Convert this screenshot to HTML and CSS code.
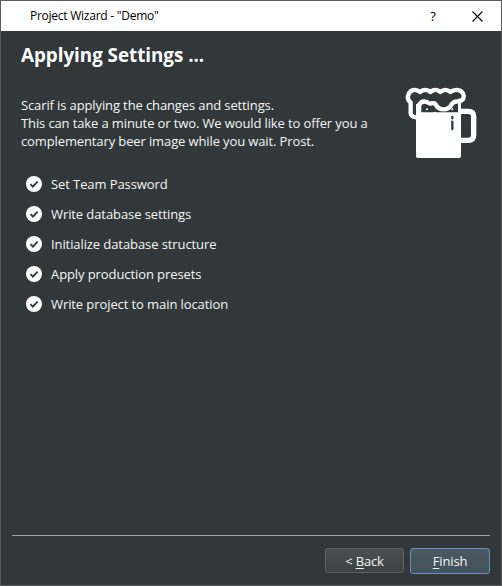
FILE: index.html
```html
<!DOCTYPE html>
<html lang="en">
<head>
<meta charset="utf-8">
<title>Project Wizard</title>
<link rel="stylesheet" href="styles.css">
</head>
<body>
<div class="window">
  <header class="titlebar">
    <span class="caption">Project Wizard - "Demo"</span>
    <span class="help">?</span>
    <svg class="close" viewBox="0 0 11 11" width="11" height="11"><path d="M.5 .5l10 10M10.5 .5l-10 10"/></svg>
  </header>
  <main class="page">
    <h1>Applying Settings ...</h1>
    <div class="intro">
      <p>Scarif is applying the changes and settings.<br>This can take a minute or two. We would like to offer you a<br>complementary beer image while you wait. Prost.</p>
      <svg class="beer" viewBox="15 18 219 222" width="73" height="74">
        <path class="white" d="M48 97H183V228Q183 234 177 234H54Q48 234 48 228Z"/>
        <path class="white" d="M48 72H64V100H48ZM174 56H183V100H174Z"/>
        <path class="handle" d="M183 94H205Q221 94 221 110V164Q221 181 205 181H183"/>
        <path class="line" d="M48 112Q32 110 32 98V67Q20 59 25 45C31 26 50 27 60 36C70 28 83 28 91 36C101 28 113 28 121 36C130 28 143 28 151 36C164 26 187 27 191 46Q193 62 175 64C163 63 157 68 153 76C144 92 117 91 110 78Q106 67 94 70Q87 72 81 66Q64 60 56 76"/>
        <circle class="white" cx="81" cy="88" r="3"/><circle class="white" cx="157" cy="88" r="3"/><circle class="white" cx="104" cy="98" r="3"/>
        <path class="mark" d="M157 111V115M157 125V147"/>
      </svg>
    </div>
    <ul class="steps">
      <li><svg class="check" viewBox="0 0 16 16"><circle cx="8" cy="8" r="8"/><path d="M4.5 8.2l2.4 2.4 4.7-5"/></svg>Set Team Password</li>
      <li><svg class="check" viewBox="0 0 16 16"><circle cx="8" cy="8" r="8"/><path d="M4.5 8.2l2.4 2.4 4.7-5"/></svg>Write database settings</li>
      <li><svg class="check" viewBox="0 0 16 16"><circle cx="8" cy="8" r="8"/><path d="M4.5 8.2l2.4 2.4 4.7-5"/></svg>Initialize database structure</li>
      <li><svg class="check" viewBox="0 0 16 16"><circle cx="8" cy="8" r="8"/><path d="M4.5 8.2l2.4 2.4 4.7-5"/></svg>Apply production presets</li>
      <li><svg class="check" viewBox="0 0 16 16"><circle cx="8" cy="8" r="8"/><path d="M4.5 8.2l2.4 2.4 4.7-5"/></svg>Write project to main location</li>
    </ul>
  </main>
  <footer class="actions">
    <button class="btn">&lt; <u>B</u>ack</button>
    <button class="btn primary"><u>F</u>inish</button>
  </footer>
</div>
</body>
</html>
```
FILE: styles.css
```css
* { box-sizing: border-box; }
body { margin: 0; font: 13px/18px "Open Sans", sans-serif; color: #f4f5f5; }
.window {
  display: flex;
  flex-direction: column;
  width: 502px;
  height: 586px;
  background: #32383a;
  border: 1px solid #5a5a5b;
}
.titlebar {
  display: flex;
  align-items: center;
  height: 30px;
  padding: 0 18px 0 29px;
  background: #fff;
  color: #000;
  font-size: 12px;
}
.caption { flex: 1; letter-spacing: -0.25px; }
.help { width: 8px; margin-right: 35px; font-size: 13px; text-align: center; }
.close { fill: none; stroke: #000; stroke-width: 1.1; }
.page { flex: 1; padding: 10px 20px 0; }
h1 {
  margin: 0;
  font-size: 20px;
  line-height: 27px;
  font-weight: 700;
  color: #fff;
  transform: scaleX(0.938);
  transform-origin: left;
}
.intro { display: flex; justify-content: space-between; margin-top: 18px; height: 76px; }
.intro p { margin: 10px 0 0; white-space: nowrap; letter-spacing: -0.12px; }
.beer { flex: none; margin-right: 3px; }
.white { fill: #fff; }
.line { fill: none; stroke: #fff; stroke-width: 13; stroke-linejoin: round; stroke-linecap: round; }
.handle { fill: none; stroke: #fff; stroke-width: 16; }
.mark { fill: none; stroke: #32383a; stroke-width: 7; stroke-linecap: round; }
.steps { margin: 7px 0 0; padding: 0 0 0 5px; list-style: none; letter-spacing: -0.09px; }
.steps li { display: flex; align-items: center; gap: 9px; height: 30px; }
.check { width: 16px; height: 16px; }
.check circle { fill: #fff; }
.check path { fill: none; stroke: #32383a; stroke-width: 1.9; }
.actions {
  display: flex;
  justify-content: flex-end;
  align-items: center;
  gap: 6px;
  height: 50px;
  margin: 0 11px;
  border-top: 1px solid #a1a5a6;
}
.btn {
  width: 79px;
  height: 25px;
  padding: 0;
  border: 1px solid #5d6365;
  border-radius: 3px;
  background: linear-gradient(#4a5052, #3c4244);
  color: #f4f5f5;
  font: inherit;
  letter-spacing: -0.15px;
}
.btn.primary { width: 80px; height: 26px; border-color: #6790c2; background: linear-gradient(#4b5960, #42525c); }
u { text-underline-offset: 2px; }
```
